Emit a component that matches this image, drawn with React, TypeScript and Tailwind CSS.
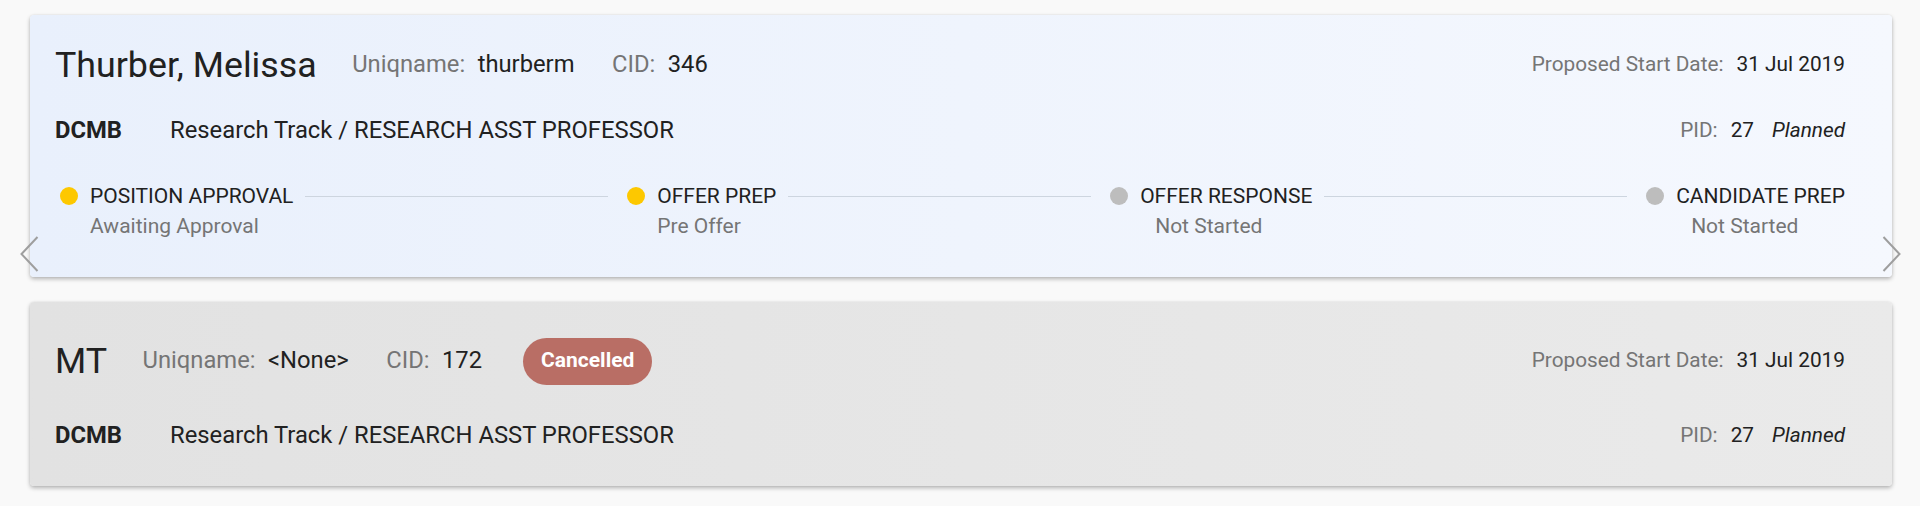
import { Fragment } from "react";

const stepsA = [
  { label: "POSITION APPROVAL", sub: "Awaiting Approval", active: true },
  { label: "OFFER PREP", sub: "Pre Offer", active: true },
  { label: "OFFER RESPONSE", sub: "Not Started", active: false },
  { label: "CANDIDATE PREP", sub: "Not Started", active: false },
];

type Step = { label: string; sub: string; active: boolean };

function Chevron({ dir }: { dir: "left" | "right" }) {
  return (
    <svg width="19" height="36" viewBox="0 0 19 36" fill="none" stroke="#9e9e9e" strokeWidth="2">
      {dir === "left" ? <polyline points="17.5,1 1.5,18 17.5,35" /> : <polyline points="1.5,1 17.5,18 1.5,35" />}
    </svg>
  );
}

function Stepper({ steps }: { steps: Step[] }) {
  return (
    <div className="mt-[36px] pb-[2px] pl-[5px] flex items-start">
      {steps.map((s, i) => (
        <Fragment key={s.label}>
          <div className="flex flex-col">
            <div className="flex items-center h-[28px]">
              <span className={`w-[18px] h-[18px] rounded-full ${s.active ? "bg-[#fdc800]" : "bg-[#bdbdbd]"}`} />
              <span className="ml-[12px] text-[21px] leading-[28px] text-[#212121] whitespace-nowrap">{s.label}</span>
            </div>
            <span
              className={`mt-[2px] text-[21px] leading-[28px] text-[#757575] whitespace-nowrap ${
                s.active ? "ml-[30px]" : "ml-[45px]"
              }`}
            >
              {s.sub}
            </span>
          </div>
          {i < steps.length - 1 && <div className="flex-1 h-px bg-[#cdd5df] mt-[14px] ml-[12px] mr-[19px]" />}
        </Fragment>
      ))}
    </div>
  );
}

function CandidateCard({
  name,
  uniqname,
  cid,
  cancelled,
  steps,
}: {
  name: string;
  uniqname: string;
  cid: string;
  cancelled?: boolean;
  steps?: Step[];
}) {
  return (
    <div
      className={`relative rounded pl-[25px] pr-[47px] pt-[29px] pb-[35px] shadow-[0_2px_4px_rgba(0,0,0,0.28),0_0_2px_rgba(0,0,0,0.08)] ${
        cancelled ? "bg-gradient-to-r from-[#e2e2e2] to-[#eaeaea]" : "bg-gradient-to-r from-[#e9f0fc] to-[#f5f8fe]"
      }`}
    >
      <div className="flex items-center justify-between">
        <div className="flex items-center">
          <span className="text-[35.75px] leading-[42px] text-[#212121] mr-[35.5px]">{name}</span>
          <span className="text-[23.75px] text-[#757575]">Uniqname:</span>
          <span className="text-[23.75px] text-[#212121] ml-[12.5px] mr-[37.5px]">{uniqname}</span>
          <span className="text-[23.75px] text-[#757575]">CID:</span>
          <span className="text-[23.75px] text-[#212121] ml-[12.5px]">{cid}</span>
          {cancelled && (
            <span className="ml-[41px] my-[6.5px] h-[47px] px-[18px] flex items-center rounded-full bg-[#b96e65] text-white font-bold text-[21px]">
              Cancelled
            </span>
          )}
        </div>
        <div className="flex items-center text-[20.8px]">
          <span className="text-[#757575]">Proposed Start Date:</span>
          <span className="text-[#212121] ml-[13px]">31 Jul 2019</span>
        </div>
      </div>

      <div className="mt-[28px] flex items-center justify-between leading-[32px]">
        <div className="flex items-center text-[23.8px] text-[#212121]">
          <span className="w-[115px] font-bold">DCMB</span>
          <span>Research Track / RESEARCH ASST PROFESSOR</span>
        </div>
        <div className="flex items-center text-[20.8px]">
          <span className="text-[#757575]">PID:</span>
          <span className="text-[#212121] ml-[13px]">27</span>
          <span className="text-[#212121] italic ml-[18px]">Planned</span>
        </div>
      </div>

      {steps && <Stepper steps={steps} />}

      {steps && (
        <>
          <div className="absolute left-[-10px] top-[221px]">
            <Chevron dir="left" />
          </div>
          <div className="absolute right-[-9px] top-[221px]">
            <Chevron dir="right" />
          </div>
        </>
      )}
    </div>
  );
}

export default function App() {
  return (
    <div className="min-h-[506px] bg-[#f9f9f9] pt-[15px] pb-[20px] pl-[30px] pr-[28px] font-['Roboto',sans-serif]">
      <div className="flex flex-col gap-[25px]">
        <CandidateCard name="Thurber, Melissa" uniqname="thurberm" cid="346" steps={stepsA} />
        <CandidateCard name="MT" uniqname="<None>" cid="172" cancelled />
      </div>
    </div>
  );
}
